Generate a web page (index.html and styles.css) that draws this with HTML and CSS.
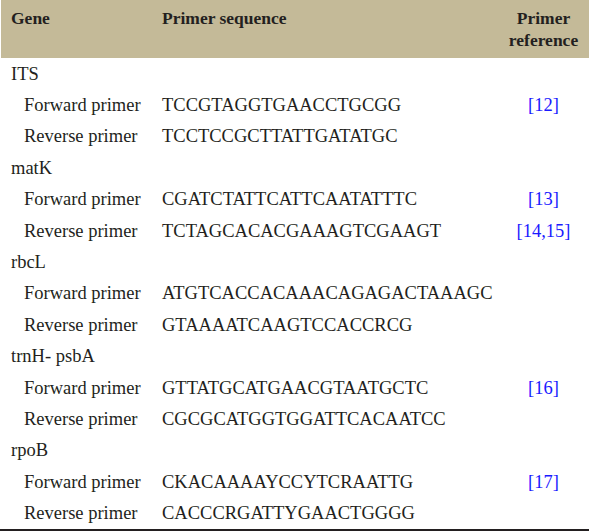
FILE: index.html
```html
<!DOCTYPE html>
<html>
<head>
<meta charset="utf-8">
<link rel="stylesheet" href="styles.css">
</head>
<body>
<table class="primers">
  <colgroup>
    <col class="c-gene">
    <col class="c-seq">
    <col class="c-ref">
  </colgroup>
  <thead>
    <tr>
      <th class="gene">Gene</th>
      <th class="seq">Primer sequence</th>
      <th class="ref">Primer<br>reference</th>
    </tr>
  </thead>
  <tbody>
    <tr><td class="gene">ITS</td><td></td><td></td></tr>
    <tr><td class="sub">Forward primer</td><td>TCCGTAGGTGAACCTGCGG</td><td class="ref"><a>[12]</a></td></tr>
    <tr><td class="sub">Reverse primer</td><td>TCCTCCGCTTATTGATATGC</td><td></td></tr>
    <tr><td class="gene">matK</td><td></td><td></td></tr>
    <tr><td class="sub">Forward primer</td><td>CGATCTATTCATTCAATATTTC</td><td class="ref"><a>[13]</a></td></tr>
    <tr><td class="sub">Reverse primer</td><td>TCTAGCACACGAAAGTCGAAGT</td><td class="ref"><a>[14,15]</a></td></tr>
    <tr><td class="gene">rbcL</td><td></td><td></td></tr>
    <tr><td class="sub">Forward primer</td><td>ATGTCACCACAAACAGAGACTAAAGC</td><td></td></tr>
    <tr><td class="sub">Reverse primer</td><td>GTAAAATCAAGTCCACCRCG</td><td></td></tr>
    <tr><td class="gene">trnH- psbA</td><td></td><td></td></tr>
    <tr><td class="sub">Forward primer</td><td>GTTATGCATGAACGTAATGCTC</td><td class="ref"><a>[16]</a></td></tr>
    <tr><td class="sub">Reverse primer</td><td>CGCGCATGGTGGATTCACAATCC</td><td></td></tr>
    <tr><td class="gene">rpoB</td><td></td><td></td></tr>
    <tr><td class="sub">Forward primer</td><td>CKACAAAAYCCYTCRAATTG</td><td class="ref"><a>[17]</a></td></tr>
    <tr><td class="sub">Reverse primer</td><td>CACCCRGATTYGAACTGGGG</td><td></td></tr>
  </tbody>
</table>
</body>
</html>
```

FILE: styles.css
```css
html, body {
  margin: 0;
  padding: 0;
  background: #ffffff;
  font-family: "Liberation Serif", "Times New Roman", "DejaVu Serif", serif;
}
.primers {
  width: 589px;
  border-collapse: collapse;
  table-layout: fixed;
  font-family: "Liberation Serif", "Times New Roman", "DejaVu Serif", serif;
  font-size: 18.5px;
  color: #231f20;
  border-bottom: 2px solid #231f20;
}
.primers th,
.primers td,
.primers a {
  font-family: "Liberation Serif", "Times New Roman", "DejaVu Serif", serif;
}
.c-gene { width: 162px; }
.c-seq { width: 336px; }
.c-ref { width: 91px; }
.primers thead tr {
  background: #c4ba98;
  height: 58px;
}
.primers th {
  font-weight: bold;
  text-align: left;
  vertical-align: top;
  padding: 7px 0 0 0;
  line-height: 22px;
  font-size: 17.5px;
}
.primers th.gene {
  padding-left: 11px;
  box-shadow: inset 1px 0 0 #ffffff;
}
.primers th.ref { text-align: center; }
.primers td {
  height: 31.4px;
  padding: 0;
  vertical-align: middle;
  white-space: nowrap;
  line-height: 20px;
}
.primers td.gene { padding-left: 11px; }
.primers td.sub { padding-left: 24px; }
.primers td.ref { text-align: center; }
.primers a {
  color: #1a1aff;
  text-decoration: none;
}
```
